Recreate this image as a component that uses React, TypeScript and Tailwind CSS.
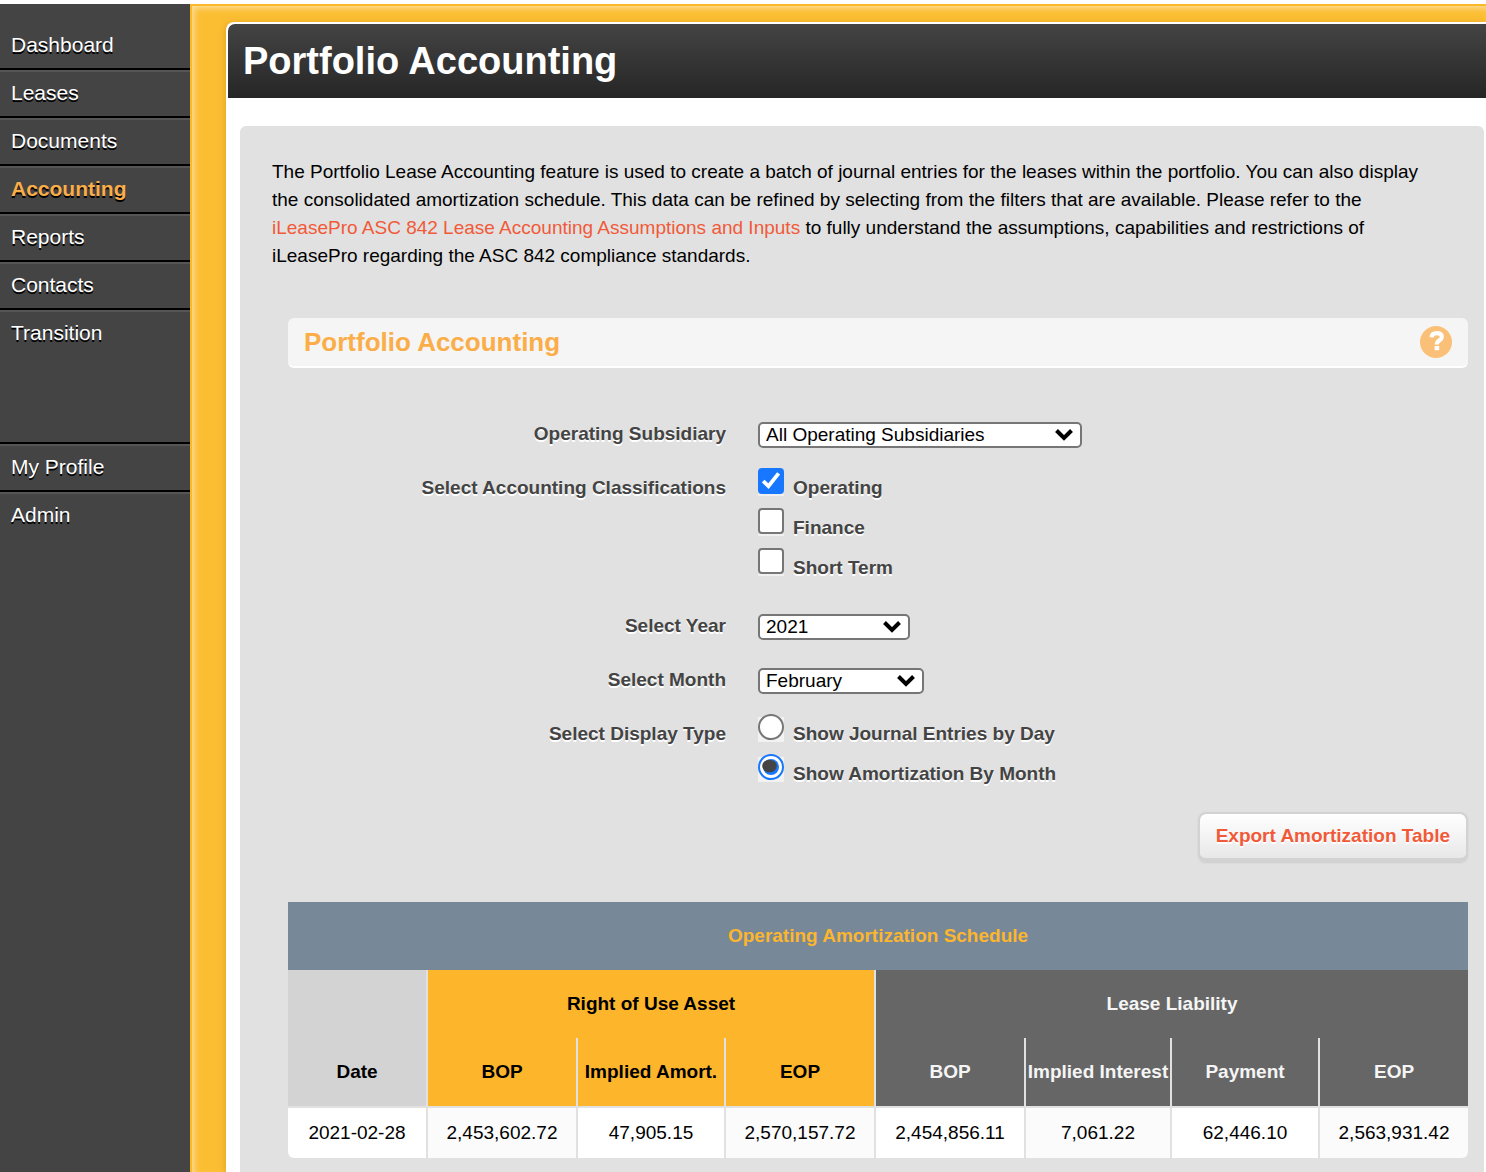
import React, { useState } from 'react';

const mainLinks = ['Dashboard', 'Leases', 'Documents', 'Accounting', 'Reports', 'Contacts', 'Transition'];
const accountLinks = ['My Profile', 'Admin'];

const classifications = ['Operating', 'Finance', 'Short Term'];
const displayTypes = ['Show Journal Entries by Day', 'Show Amortization By Month'];

const subsidiaries = ['All Operating Subsidiaries'];
const years = ['2019', '2020', '2021', '2022'];
const months = [
  'January', 'February', 'March', 'April', 'May', 'June',
  'July', 'August', 'September', 'October', 'November', 'December',
];

const rows = [
  ['2021-02-28', '2,453,602.72', '47,905.15', '2,570,157.72', '2,454,856.11', '7,061.22', '62,446.10', '2,563,931.42'],
];

const labelClass = 'font-bold text-[#444] [text-shadow:0_2px_0_#fff]';

const NavItem = ({ label, first = false }: { label: string; first?: boolean }) => {
  const active = label === 'Accounting';
  return (
    <li className={first ? 'border-t-2 border-transparent' : 'border-t-2 border-black shadow-[inset_0_2px_0_#555]'}>
      <a
        href="#"
        className={`block h-[46px] pl-[11px] leading-[46px] [text-shadow:0_2px_0_#000] ${
          active ? 'font-bold text-[#fbad48]' : 'text-white'
        }`}
      >
        {label}
      </a>
    </li>
  );
};

const Sidebar = () => (
  <nav className="w-[190px] shrink-0 bg-[#444] pt-4 text-[21px]">
    <ul>
      {mainLinks.map((label, index) => (
        <NavItem key={label} label={label} first={index === 0} />
      ))}
    </ul>
    <ul className="mt-[86px]">
      {accountLinks.map((label) => (
        <NavItem key={label} label={label} />
      ))}
    </ul>
  </nav>
);

interface SelectProps {
  id: string;
  className: string;
  options: string[];
  initial: string;
}

const Select = ({ id, className, options, initial }: SelectProps) => {
  const [value, setValue] = useState(initial);
  return (
    <div className={`relative ${className}`}>
      <select
        id={id}
        value={value}
        onChange={(e) => setValue(e.target.value)}
        className="block h-[26px] w-full appearance-none rounded-[5px] border-2 border-[#767676] bg-white pl-[6px] leading-[22px] text-black"
      >
        {options.map((option) => (
          <option key={option}>{option}</option>
        ))}
      </select>
      <svg className="pointer-events-none absolute top-[6px] right-2" width="20" height="14" viewBox="0 0 20 14" fill="none">
        <path d="M2.5 2.5L10 10L17.5 2.5" stroke="#000" strokeWidth="4" />
      </svg>
    </div>
  );
};

const ClassificationOptions = () => {
  const [checked, setChecked] = useState(['Operating']);

  const toggle = (name: string) => {
    setChecked(checked.includes(name) ? checked.filter((c) => c !== name) : [...checked, name]);
  };

  return (
    <div>
      {classifications.map((name) => (
        <label key={name} className={`flex h-10 items-start gap-[9px] ${labelClass}`}>
          <span className="grid shrink-0 shadow-[0_2px_0_#f0f0f0]">
            <input
              type="checkbox"
              checked={checked.includes(name)}
              onChange={() => toggle(name)}
              className="peer col-start-1 row-start-1 size-[26px] appearance-none rounded-[4px] border-2 border-[#767676] bg-white checked:border-[#1877ff] checked:bg-[#1877ff]"
            />
            <svg className="pointer-events-none invisible col-start-1 row-start-1 peer-checked:visible" width="26" height="26" viewBox="0 0 26 26" fill="none">
              <path d="M5.2 13L10.5 18.2L20.6 5.4" stroke="#fff" strokeWidth="3.8" />
            </svg>
          </span>
          <span className="pt-[6px]">{name}</span>
        </label>
      ))}
    </div>
  );
};

const DisplayTypeOptions = () => {
  const [selected, setSelected] = useState(displayTypes[1]);
  return (
    <div>
      {displayTypes.map((name) => (
        <label key={name} className={`flex h-10 items-start gap-[9px] ${labelClass}`}>
          <span className="grid shrink-0 bg-linear-to-b from-[#e1e1e1] from-10% to-[#f2f2f2] to-10% shadow-[0_2px_0_#f2f2f2]">
            <input
              type="radio"
              name="display-type"
              checked={selected === name}
              onChange={() => setSelected(name)}
              className="peer col-start-1 row-start-1 size-[26px] appearance-none rounded-full border-2 border-[#767676] bg-white checked:border-[#1877ff]"
            />
            <svg className="pointer-events-none invisible col-start-1 row-start-1 peer-checked:visible" width="26" height="26" viewBox="0 0 26 26">
              <circle cx="13" cy="13" r="8" fill="#1877ff" />
              <ellipse cx="11.5" cy="12" rx="7.3" ry="6.3" fill="#444" />
            </svg>
          </span>
          <span className="pt-[6px]">{name}</span>
        </label>
      ))}
    </div>
  );
};

const AmortizationTable = () => (
  <table className="mt-10 w-full table-fixed border-separate border-spacing-0 text-center whitespace-nowrap">
    <colgroup>
      <col className="w-[138px]" />
      <col className="w-[150px]" />
      <col className="w-[148px]" />
      <col className="w-[150px]" />
      <col className="w-[150px]" />
      <col className="w-[146px]" />
      <col className="w-[148px]" />
      <col className="w-[150px]" />
    </colgroup>
    <thead>
      <tr className="h-[68px] bg-[#778899] text-[#fcb62e]">
        <th colSpan={8}>Operating Amortization Schedule</th>
      </tr>
      <tr className="h-[68px]">
        <th className="bg-[#d3d3d3]" />
        <th colSpan={3} className="border-l-2 border-[#e1e1e1] bg-[#fdb52b] text-black">Right of Use Asset</th>
        <th colSpan={4} className="border-l-2 border-[#e1e1e1] bg-[#666] text-[#f5f5f5]">Lease Liability</th>
      </tr>
      <tr className="h-[68px]">
        <th className="bg-[#d3d3d3] text-black">Date</th>
        {['BOP', 'Implied Amort.', 'EOP'].map((name) => (
          <th key={name} className="border-l-2 border-[#e1e1e1] bg-[#fdb52b] text-black">{name}</th>
        ))}
        {['BOP', 'Implied Interest', 'Payment', 'EOP'].map((name) => (
          <th key={name} className="border-l-2 border-[#e1e1e1] bg-[#666] text-[#f5f5f5]">{name}</th>
        ))}
      </tr>
    </thead>
    <tbody>
      {rows.map((row) => (
        <tr key={row[0]} className="h-[52px]">
          {row.map((cell, index) => (
            <td
              key={index}
              className="border-t-2 border-l-2 border-[#e1e1e1] bg-white first:rounded-bl-[6px] first:border-l-0 last:rounded-br-[6px] even:bg-[#fbfbfb]"
            >
              {cell}
            </td>
          ))}
        </tr>
      ))}
    </tbody>
  </table>
);

const App = () => {
  return (
    <div className="flex min-h-screen flex-col bg-white pt-1 font-['Liberation_Sans',Arial,sans-serif] text-[19px] leading-[28px] text-black">
      <div className="flex grow">
        <Sidebar />

        {/* Gold frame around the page */}
        <div className="flex min-w-0 grow border-t-2 border-l-2 border-[#fbb829] bg-[#fbbe32] pt-4 pl-[34px] shadow-[inset_3px_3px_6px_-1px_#fde0a2]">
          <main className="flex min-w-0 grow flex-col rounded-tl-[8px] bg-white pt-[2px] pl-[2px] shadow-[-1px_1px_6px_rgba(150,90,0,0.25)]">
            <header className="rounded-tl-[7px] bg-linear-to-b from-[#444] to-[#262626] pl-[15px]">
              <h1 className="h-[74px] text-[38px] leading-[74px] font-bold text-white">Portfolio Accounting</h1>
            </header>

            <div className="mt-7 mr-[2px] ml-3 grow rounded-t-[6px] bg-[#e1e1e1] pt-8 pr-4 pb-[14px] pl-8">
              <p className="pr-8">
                The Portfolio Lease Accounting feature is used to create a batch of journal entries for the leases
                within the portfolio. You can also display the consolidated amortization schedule. This data can be
                refined by selecting from the filters that are available. Please refer to the{' '}
                <a href="#" className="text-[#f15a38]">iLeasePro ASC 842 Lease Accounting Assumptions and Inputs</a>{' '}
                to fully understand the assumptions, capabilities and restrictions of iLeasePro regarding the ASC 842
                compliance standards.
              </p>

              <section className="mt-12 ml-4">
                <div className="flex h-[50px] items-center justify-between rounded-[6px] border-b-2 border-white bg-[#f5f5f5] px-4">
                  <h2 className="text-[26px] font-bold text-[#fbad48]">Portfolio Accounting</h2>
                  <button type="button" aria-label="Help" className="size-8 rounded-full bg-[#fac078]">
                    <svg width="32" height="32" viewBox="0 0 32 32" fill="none">
                      <path d="M11.6 11.4C11.8 8.6 13.6 7.2 16.6 7.2C19.8 7.2 21.8 8.6 21.8 11C21.8 14.4 16.8 14.2 16.8 18.4" stroke="#fff" strokeWidth="4.2" />
                      <rect x="14.6" y="20" width="4.6" height="4.2" fill="#fff" />
                    </svg>
                  </button>
                </div>

                <form className="mt-[54px] grid grid-cols-[438fr_710fr] gap-x-8">
                  <label htmlFor="subsidiary" className={`-mt-[2px] h-12 text-right ${labelClass}`}>Operating Subsidiary</label>
                  <Select id="subsidiary" className="w-[324px]" options={subsidiaries} initial="All Operating Subsidiaries" />

                  <div className={`pt-[6px] text-right ${labelClass}`}>Select Accounting Classifications</div>
                  <ClassificationOptions />

                  <label htmlFor="year" className={`mt-6 h-14 text-right ${labelClass}`}>Select Year</label>
                  <Select id="year" className="mt-[26px] w-[152px]" options={years} initial="2021" />

                  <label htmlFor="month" className={`-mt-[2px] h-12 text-right ${labelClass}`}>Select Month</label>
                  <Select id="month" className="w-[166px]" options={months} initial="February" />

                  <div className={`pt-[6px] text-right ${labelClass}`}>Select Display Type</div>
                  <DisplayTypeOptions />
                </form>

                <div className="mt-[18px] flex justify-end">
                  <button
                    type="button"
                    className="h-[50px] rounded-[8px] border-2 border-b-4 border-[#d2d2d2] bg-linear-to-b from-white to-[#e8e8e8] bg-clip-padding px-4 font-bold text-[#f15a38] shadow-[0_1px_2px_#ccc] [text-shadow:0_2px_0_#fff]"
                  >
                    Export Amortization Table
                  </button>
                </div>

                <AmortizationTable />
              </section>
            </div>
          </main>
        </div>
      </div>
    </div>
  );
};

export default App;
